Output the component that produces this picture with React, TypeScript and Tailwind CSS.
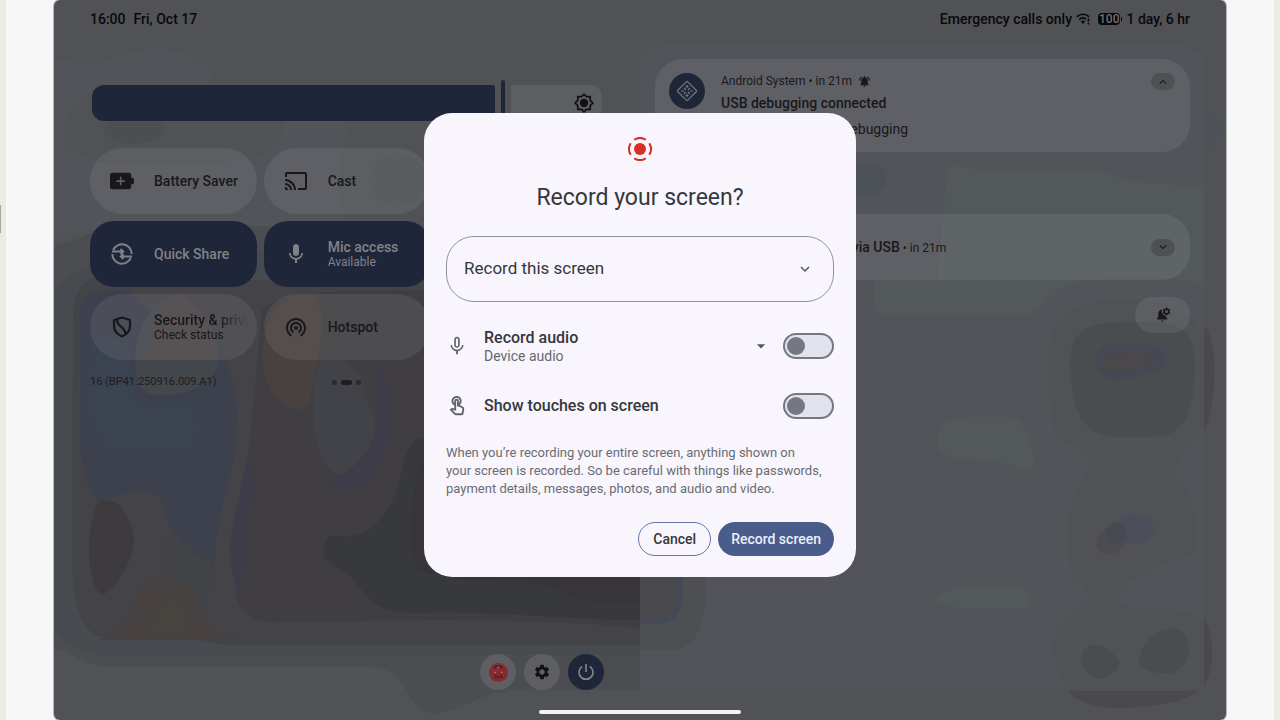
import type { ReactNode } from "react";
import {
  MdArrowDropDown,
  MdCast,
  MdExpandLess,
  MdExpandMore,
  MdMic,
  MdMicNone,
  MdNotificationsActive,
  MdOutlineTouchApp,
  MdSettings,
  MdWifiTethering,
} from "react-icons/md";

type Tile = {
  title: string;
  subtitle?: string;
  icon: ReactNode;
  active?: boolean;
};

const tiles: Tile[] = [
  { title: "Battery Saver", icon: <BatteryPlusIcon /> },
  { title: "Cast", icon: <MdCast className="size-6" /> },
  { title: "Quick Share", icon: <QuickShareIcon />, active: true },
  { title: "Mic access", subtitle: "Available", icon: <MdMic className="size-[26px]" />, active: true },
  { title: "Security & privacy", subtitle: "Check status", icon: <ShieldIcon /> },
  { title: "Hotspot", icon: <MdWifiTethering className="size-6" /> },
];

function BatteryPlusIcon() {
  return (
    <svg className="h-[18px] w-[26px]" viewBox="0 0 26 18" aria-hidden="true">
      <path
        fill="currentColor"
        fillRule="evenodd"
        d="M2.500 0h18a2.500 2.500 0 0 1 2.500 2.500V5.500h1a2 2 0 0 1 2 2v3a2 2 0 0 1-2 2h-1v3a2.500 2.500 0 0 1-2.500 2.500h-18a2.500 2.500 0 0 1-2.500-2.500v-13a2.500 2.500 0 0 1 2.500-2.500zM10.700 4.500v3.700H7v1.800h3.700v3.700h1.800V10h3.700V8.200h-3.700V4.500z"
      />
    </svg>
  );
}

function QuickShareIcon() {
  return (
    <svg className="size-6" viewBox="0 0 24 24" fill="none" stroke="currentColor" strokeWidth="2" aria-hidden="true">
      <path d="M3.200 8A9.700 9.700 0 0 1 21.700 12M20.800 16A9.700 9.700 0 0 1 2.300 12" />
      <path d="M2 9.500H12.500M10.500 7l2.700 2.500L10.500 12M22 14.500H11.500M13.500 12l-2.700 2.500L13.500 17" />
    </svg>
  );
}

function ShieldIcon() {
  return (
    <svg className="size-6" viewBox="0 0 24 24" fill="none" stroke="currentColor" strokeWidth="2.200" strokeLinejoin="round" aria-hidden="true">
      <path d="M12 2.500 20 5v6c0 5-3.500 8.500-8 10.500C7.500 19.500 4 16 4 11V5z" />
      <path d="M7 4.500C7 13 15 10 15.500 19.500" />
    </svg>
  );
}

function RecordIcon() {
  return (
    <svg className="size-6" viewBox="0 0 24 24" fill="none" stroke="#d93025" strokeWidth="2" aria-hidden="true">
      <circle cx="12" cy="12" r="6" fill="#d93025" stroke="none" />
      <path d="M6.200 2.700a11 11 0 0 1 11.600 0M6.200 21.300a11 11 0 0 0 11.600 0M2.700 6.200a11 11 0 0 0 0 11.600M21.300 6.200a11 11 0 0 1 0 11.600" />
    </svg>
  );
}

function BrightnessIcon() {
  return (
    <svg className="size-5" viewBox="0 0 20 20" fill="none" stroke="currentColor" strokeWidth="1.700" aria-hidden="true">
      <circle cx="10" cy="10" r="4.200" fill="currentColor" stroke="none" />
      <path d="M10 1.200 12.400 3.600H16.200V7.400L18.800 10 16.200 12.600V16.400H12.400L10 18.800 7.600 16.400H3.800V12.600L1.200 10 3.800 7.400V3.600H7.600z" />
    </svg>
  );
}

function WifiAlertIcon() {
  return (
    <svg className="h-3 w-[14px]" viewBox="0 0 14 12" fill="none" stroke="currentColor" strokeWidth="1.700" aria-hidden="true">
      <path d="M.8 3.800C4.500.4 9.500.4 13.200 3.800M3.200 6.600c2-1.800 4.600-2 6.800-.6" />
      <path d="M4.800 8.200 7 11 9 8.400C8 7.400 6 7.400 4.800 8.200z" fill="currentColor" stroke="none" />
      <path d="M12.400 5.500v3.300M12.400 10v1.500" />
    </svg>
  );
}

function ChipIcon() {
  return (
    <svg className="size-[22px]" viewBox="0 0 22 22" fill="none" stroke="currentColor" strokeWidth="1.200" aria-hidden="true">
      <rect x="4" y="4" width="14" height="14" rx="1" transform="rotate(45 11 11)" />
      <path d="M11 5v3M11 14v3M5 11h3M14 11h3M9.500 6.500h3M9.500 15.500h3M8 8l2 2M14 8l-2 2M8 14l2-2M14 14l-2-2" />
    </svg>
  );
}

function BellGearIcon() {
  return (
    <svg className="size-4" viewBox="0 0 16 16" fill="currentColor" aria-hidden="true">
      <path d="M2 12.500v-1.300l1.300-1V7c0-2.400 1.400-4 3.700-4.400A5 5 0 0 0 11 9v1.200l1.300 1v1.300zM6 13.500h2.600a1.300 1.300 0 0 1-2.600 0z" />
      <circle cx="11.500" cy="4.500" r="2.300" fill="none" stroke="currentColor" strokeWidth="1.600" />
      <path d="M11.500.6v1.300M11.500 7.100v1.300M8.100 2.600l1.200.6M13.700 5.800l1.200.6M8.100 6.400l1.200-.6M13.700 3.200l1.200-.6" stroke="currentColor" strokeWidth="1.400" />
    </svg>
  );
}

function PowerIcon() {
  return (
    <svg className="size-[18px]" viewBox="0 0 18 18" fill="none" stroke="currentColor" strokeWidth="1.600" aria-hidden="true">
      <path d="M9 1v8M5.200 3.400a7 7 0 1 0 7.600 0" />
    </svg>
  );
}

function AvatarIcon() {
  return (
    <svg className="size-[19px]" viewBox="0 0 19 19" aria-hidden="true">
      <circle cx="9.500" cy="9.500" r="9.500" fill="#862a2d" />
      <path d="M5.500 5.500C6.500 2 12.500 2 13.500 5.500" fill="none" stroke="#3c2426" strokeWidth="1.500" />
      <path d="M6 11.500c1 3.500 6 3.500 7 0M5 15l2-1M14 15l-2-1" fill="none" stroke="#571f22" strokeWidth="1.200" />
      <path d="M5.500 9.500h1.600M12 9.500h1.600M8.500 4.500h1.500" stroke="#8c8587" strokeWidth="1.400" />
    </svg>
  );
}

function Wallpaper() {
  return (
    <svg
      className="absolute inset-0 size-full"
      viewBox="54 0 1172 720"
      preserveAspectRatio="none"
      aria-hidden="true"
    >
      <path fill="#515255" d="M54 0H1226V720H54z" />
      {/* left half */}
      <path fill="#535459" d="M54 60C75 60 85 70 105 62C140 42 195 45 213 73C212 90 180 84 120 84C90 84 60 110 63 135C70 165 110 170 250 160C285 145 285 125 282 121H346C350 150 330 165 345 215V230H54z" />
      <ellipse cx="134" cy="129" rx="30" ry="15" fill="#4d4e52" />
      <ellipse cx="398" cy="180" rx="28" ry="26" fill="#4c5153" />
      <path fill="#4c4d50" d="M54 246C85 238 90 232 110 226H640V690H520C480 690 460 714 430 713C405 710 410 667 370 667H110C85 667 75 652 54 648z" />
      <path fill="#474a4f" d="M54 290C80 262 110 250 250 250H640V655H100C75 650 65 640 54 630z" />
      <path fill="#444347" d="M73 320C74 280 90 272 120 280H640V645H230C190 640 150 625 100 637C80 630 72 600 72 560z" />
      <path fill="#403e42" d="M262 310C280 292 330 290 424 290H640V628C500 615 380 622 270 622C245 620 236 605 236 590z" />
      <path fill="#3d414d" d="M80 310C82 288 110 288 130 292C160 330 200 320 212 342C235 370 240 400 236 430C234 490 220 490 214 564C190 555 165 530 163 505C158 485 130 490 100 502C82 490 80 450 80 420z" />
      <path fill="#3b4350" d="M90 342C120 330 130 340 136 400C145 415 185 380 200 420C203 445 190 454 175 454H120C100 454 90 430 85 400z" />
      <path fill="#44474c" d="M137 340C150 300 165 295 177 294C205 305 218 330 219 360C215 380 190 400 150 394C137 390 132 370 137 340z" />
      <path fill="#4a4547" d="M150 345C160 300 172 294 182 294C202 306 218 330 214 360H145z" />
      <path fill="#49413f" d="M262 350C270 300 290 290 313 294C328 315 322 340 317 360C312 400 308 410 298 410C280 408 262 390 262 350z" />
      <path fill="#424348" d="M318 362C345 350 365 370 365 400C378 420 380 435 366 455C355 470 345 480 342 478C318 465 305 430 318 362z" />
      <path fill="#3d3c48" d="M372 362C395 370 395 440 378 470C365 495 345 498 325 480C355 475 377 445 376 420zM248 455C252 470 255 480 252 500L240 592C234 590 230 560 230 540z" />
      <path fill="#3e3b3f" d="M98 502C115 495 130 510 134 540C134 560 115 590 102 595C90 590 82 540 98 502z" />
      <path fill="#424347" d="M165 532C185 555 205 555 214 565C212 590 205 605 200 604C190 580 175 580 160 577z" />
      <path fill="#474142" d="M130 615C132 590 145 577 165 577C185 580 195 590 202 612C205 625 220 635 250 640H100C115 630 125 625 130 615z" />
      <path fill="#46443f" d="M152 625L165 600C180 595 187 605 185 634H145z" />
      <path fill="#38393c" d="M424 437C400 440 405 480 390 505C370 540 350 538 330 535C322 545 320 560 335 567C365 575 355 610 410 613C500 610 560 620 640 620V437z" />
      <path fill="#373539" d="M420 465C410 500 405 570 424 572C480 585 540 580 560 590C580 605 610 603 640 603V465z" />
      {/* right half */}
      <path fill="#535459" d="M640 60C645 50 655 45 670 45H1180C1190 45 1195 55 1204 53V690H640z" />
      <path fill="#4c5057" d="M856 165C885 160 890 175 886 185C880 195 865 196 856 196z" />
      <path fill="#53595b" d="M948 166C960 162 970 172 990 172H1090C1120 172 1120 184 1160 183L1204 188V285C1180 275 1100 275 1070 284C1045 295 1040 314 1025 314H885C870 312 874 300 874 280H937z" />
      <path fill="#515256" d="M1052 420C1045 360 1045 320 1080 305C1130 290 1195 300 1204 340V420C1200 445 1170 460 1175 475C1200 500 1200 550 1190 557C1150 560 1120 590 1110 600C1140 615 1190 600 1204 625V690H1070C1050 670 1050 640 1060 625C1080 605 1090 600 1090 595C1065 570 1060 540 1073 500C1085 470 1100 470 1080 450C1065 440 1055 440 1052 420z" />
      <path fill="#4b4c50" d="M1070 360C1072 325 1095 322 1130 322H1160C1190 325 1196 345 1195 375C1192 420 1180 437 1150 437H1115C1078 436 1070 400 1070 360z" />
      <path fill="#454955" d="M1095 360C1096 345 1110 344 1125 344C1145 344 1167 345 1167 358C1166 375 1140 375 1120 380C1103 379 1095 370 1095 360z" />
      <path fill="#4b484c" d="M1105 357C1115 350 1150 350 1154 359C1150 370 1130 374 1112 374C1103 370 1102 362 1105 357z" />
      <path fill="#53595b" d="M938 440C938 422 955 417 970 417H1010C1028 420 1028 440 1035 457C1034 470 1028 472 1020 468C995 458 975 460 955 458C940 455 938 450 938 440zM936 598C945 590 960 586 975 586H1015C1033 590 1033 607 1022 608H960C945 607 937 602 936 598z" />
      <ellipse cx="1133" cy="529" rx="21" ry="15" fill="#4b4f5a" />
      <ellipse cx="1112" cy="540" rx="17" ry="13" fill="#4e4c50" transform="rotate(-35 1112 540)" />
      <circle cx="1116" cy="534" r="11" fill="#484a52" />
      <path fill="#4b4c50" d="M1082 655C1085 640 1105 640 1120 662C1115 680 1095 683 1087 672C1082 667 1081 661 1082 655zM1140 655C1145 635 1165 625 1180 630C1195 645 1190 665 1173 673C1155 675 1135 670 1140 655z" />
      <path fill="#4a4a4e" d="M1068 691H1200C1175 705 1150 708 1110 708C1090 706 1075 700 1068 691zM1204 325C1220 345 1216 400 1204 435zM1204 618C1216 640 1214 670 1204 685z" />
      <path fill="#4c5059" d="M1207 110C1218 115 1224 135 1207 150z" />
      <path fill="#4e4f53" d="M640 577H706C706 620 700 645 675 650H640z" />
      <path fill="#454955" d="M640 577H683C683 610 680 623 655 624H640z" />
      <path fill="#4a4a4e" d="M640 577H677C677 605 672 618 655 619H640z" />
    </svg>
  );
}

function StatusBar() {
  return (
    <header className="flex h-[38px] items-center justify-between px-9 text-sm leading-5 font-medium text-[#09090a]">
      <div className="flex gap-2">
        <span>16:00</span>
        <span>Fri, Oct 17</span>
      </div>
      <div className="flex items-center gap-1">
        <span>Emergency calls only</span>
        <WifiAlertIcon />
        <span className="ml-1 flex items-center gap-px">
          <span className="rounded-sm bg-[#09090a] px-px text-xs leading-3 font-medium text-[#707174]">100</span>
          <span className="h-1 w-px bg-[#09090a]" />
        </span>
        <span>1 day, 6 hr</span>
      </div>
    </header>
  );
}

function QuickTile({ title, subtitle, icon, active }: Tile) {
  return (
    <button
      type="button"
      className={`flex h-[66px] items-center gap-5 overflow-hidden pl-5 text-left odd:col-start-1 ${
        active ? "rounded-3xl bg-[#20263a] text-[#808187]" : "rounded-full bg-white/[.07] text-[#18181b]"
      }`}
    >
      <span className="flex w-6 shrink-0 justify-center">{icon}</span>
      <span className="min-w-0 flex-1 pr-2">
        <span
          className={`block overflow-hidden text-sm leading-4 font-medium whitespace-nowrap ${
            title.length > 16 ? "[mask-image:linear-gradient(to_right,black_65%,transparent)]" : ""
          }`}
        >
          {title}
        </span>
        {subtitle && <span className="block text-xs leading-[14px]">{subtitle}</span>}
      </span>
    </button>
  );
}

function QuickSettings() {
  return (
    <section className="flex w-1/2 flex-col px-9" aria-label="Quick settings">
      <div className="relative mt-[42px] flex h-[46px] items-center gap-1.5 px-0.5 text-[#111113]">
        <div className="h-9 w-[79%] rounded-l-xl rounded-r-xs bg-[#20263a]" />
        <div className="h-full w-1 rounded-full bg-[#20263a]" />
        <div className="flex h-9 flex-1 items-center justify-end rounded-l-xs rounded-r-xl bg-white/[.07] pr-2">
          <BrightnessIcon />
        </div>
        <input
          type="range"
          aria-label="Display brightness"
          defaultValue={80}
          className="absolute inset-0 size-full cursor-pointer opacity-0"
        />
      </div>

      <div className="mt-[22px] grid grid-cols-3 gap-[7px]">
        {tiles.map((tile) => (
          <QuickTile key={tile.title} {...tile} />
        ))}
      </div>

      <div className="mt-[14px] grid grid-cols-3 items-center text-[11px] leading-4 text-[#1d1d20]">
        <span className="whitespace-nowrap">16 (BP41.250916.009.A1)</span>
        <div className="flex items-center justify-center gap-1">
          <span className="size-[5px] rounded-full bg-[#2b2b2e]" />
          <span className="h-[5px] w-[11px] rounded-full bg-[#1d1d20]" />
          <span className="size-[5px] rounded-full bg-[#2b2b2e]" />
        </div>
      </div>

      <div className="mt-auto flex justify-end gap-2">
        <button type="button" aria-label="User" className="flex size-9 items-center justify-center rounded-full bg-white/10">
          <AvatarIcon />
        </button>
        <button type="button" aria-label="Settings" className="flex size-9 items-center justify-center rounded-full bg-white/10 text-[#111113]">
          <MdSettings className="size-[18px]" />
        </button>
        <button type="button" aria-label="Power" className="flex size-9 items-center justify-center rounded-full bg-[#20263a] text-[#85868c]">
          <PowerIcon />
        </button>
      </div>
    </section>
  );
}

function Notifications() {
  return (
    <section className="flex w-1/2 flex-col pr-9 pl-[15px] text-[#18181b]" aria-label="Notifications">
      <article className="mt-[21px] flex h-[93px] gap-4 rounded-[28px] bg-white/[.07] pt-[14px] pr-[15px] pl-[14px]">
        <div className="flex size-9 shrink-0 items-center justify-center rounded-full bg-[#20263a] text-[#75777d]">
          <ChipIcon />
        </div>
        <div className="flex-1">
          <p className="flex items-center gap-1.5 text-xs leading-4">
            <span>Android System • in 21m</span>
            <MdNotificationsActive className="size-[13px]" />
          </p>
          <h2 className="mt-1.5 text-sm leading-4 font-medium">USB debugging connected</h2>
          <p className="mt-2 text-sm leading-5">Tap to turn off USB debugging</p>
        </div>
        <button type="button" aria-label="Collapse" className="flex h-[17px] w-6 items-center justify-center rounded-full bg-[#4f5054]">
          <MdExpandLess className="size-[14px]" />
        </button>
      </article>

      <article className="mt-[62px] flex h-[66px] items-center gap-4 rounded-[28px] bg-white/[.07] pr-[15px] pl-[14px]">
        <div className="size-9 shrink-0 rounded-full bg-[#20263a]" />
        <p className="flex-1 text-xs leading-4">
          <span className="text-sm leading-4 font-medium">Charging this device via USB</span> • in 21m
        </p>
        <button type="button" aria-label="Expand" className="flex h-[17px] w-6 items-center justify-center rounded-full bg-[#4f5054]">
          <MdExpandMore className="size-[14px]" />
        </button>
      </article>

      <button
        type="button"
        aria-label="Notification settings"
        className="mt-[17px] flex h-9 w-[55px] items-center justify-center self-end rounded-full bg-white/[.07]"
      >
        <BellGearIcon />
      </button>
    </section>
  );
}

function Switch({ id }: { id: string }) {
  return (
    <input
      id={id}
      type="checkbox"
      role="switch"
      className="h-[26px] w-[51px] shrink-0 appearance-none rounded-full border-2 border-[#767881] bg-[#e1e2ec] p-0.5 before:block before:size-[18px] before:rounded-full before:bg-[#767881] checked:bg-[#4a5c8c] checked:before:translate-x-6"
    />
  );
}

function RecordDialog() {
  return (
    <form
      role="dialog"
      aria-labelledby="dialog-title"
      className="w-full max-w-[432px] rounded-[28px] bg-[#f8f5fd] px-[22px] pt-6 pb-[21px] text-[#35373b]"
      onSubmit={(e) => e.preventDefault()}
    >
      <div className="flex justify-center">
        <RecordIcon />
      </div>
      <h1 id="dialog-title" className="mt-[21px] text-center text-[23px] leading-8">
        Record your screen?
      </h1>

      <div className="relative mt-[22px]">
        <select
          aria-label="What to record"
          className="h-[66px] w-full appearance-none rounded-[28px] border border-[#919298] bg-transparent px-[17px] text-[17px]"
        >
          <option>Record this screen</option>
        </select>
        <MdExpandMore className="pointer-events-none absolute inset-y-0 right-5 my-auto size-[18px] text-[#55575c]" />
      </div>

      <div className="mt-6 flex h-10 items-center">
        <MdMicNone className="size-[22px] text-[#5f6167]" />
        <div className="relative ml-4 flex-1">
          <label htmlFor="record-audio" className="block text-base leading-5 font-medium">
            Record audio
          </label>
          <select
            aria-label="Audio source"
            className="block w-full appearance-none bg-transparent text-sm leading-4 text-[#66686e]"
          >
            <option>Device audio</option>
          </select>
          <MdArrowDropDown className="pointer-events-none absolute inset-y-0 right-3 my-auto size-5 text-[#55575c]" />
        </div>
        <Switch id="record-audio" />
      </div>

      <div className="mt-5 flex h-10 items-center">
        <MdOutlineTouchApp className="size-[22px] text-[#5f6167]" />
        <label htmlFor="show-touches" className="ml-4 flex-1 text-base leading-5 font-medium">
          Show touches on screen
        </label>
        <Switch id="show-touches" />
      </div>

      <p className="mt-[18px] text-[13px] leading-[18px] text-[#6a6c72]">
        When you’re recording your entire screen, anything shown on
        <br />
        your screen is recorded. So be careful with things like passwords, payment details, messages, photos, and audio
        and video.
      </p>

      <div className="mt-6 flex justify-end gap-[7px] text-sm font-medium">
        <button type="button" className="h-[34px] rounded-full border border-[#6678a8] px-[14px]">
          Cancel
        </button>
        <button type="submit" className="h-[34px] rounded-full bg-[#4a5c8c] px-[13px] text-[#eceefa]">
          Record screen
        </button>
      </div>
    </form>
  );
}

export default function App() {
  return (
    <div className="relative flex min-h-screen border-x-6 border-[#edeadf] bg-[#f7f7f7] px-12 font-['Roboto',sans-serif]">
      <span className="absolute top-[205px] -left-1.5 h-7 w-px bg-[#a5a5a5]" />
      <main className="relative flex flex-1 flex-col overflow-hidden rounded-md ring-1 ring-[#b4b7b8]">
        <Wallpaper />
        <div className="relative flex flex-1 flex-col">
          <StatusBar />
          <div className="flex flex-1">
            <QuickSettings />
            <Notifications />
          </div>
          <div className="flex h-[30px] items-end justify-center pb-1.5">
            <span className="h-1 w-[202px] rounded-full bg-[#f3f3f3]" />
          </div>
        </div>
        <div className="absolute inset-0 flex items-center justify-center pb-[30px]">
          <RecordDialog />
        </div>
      </main>
    </div>
  );
}
